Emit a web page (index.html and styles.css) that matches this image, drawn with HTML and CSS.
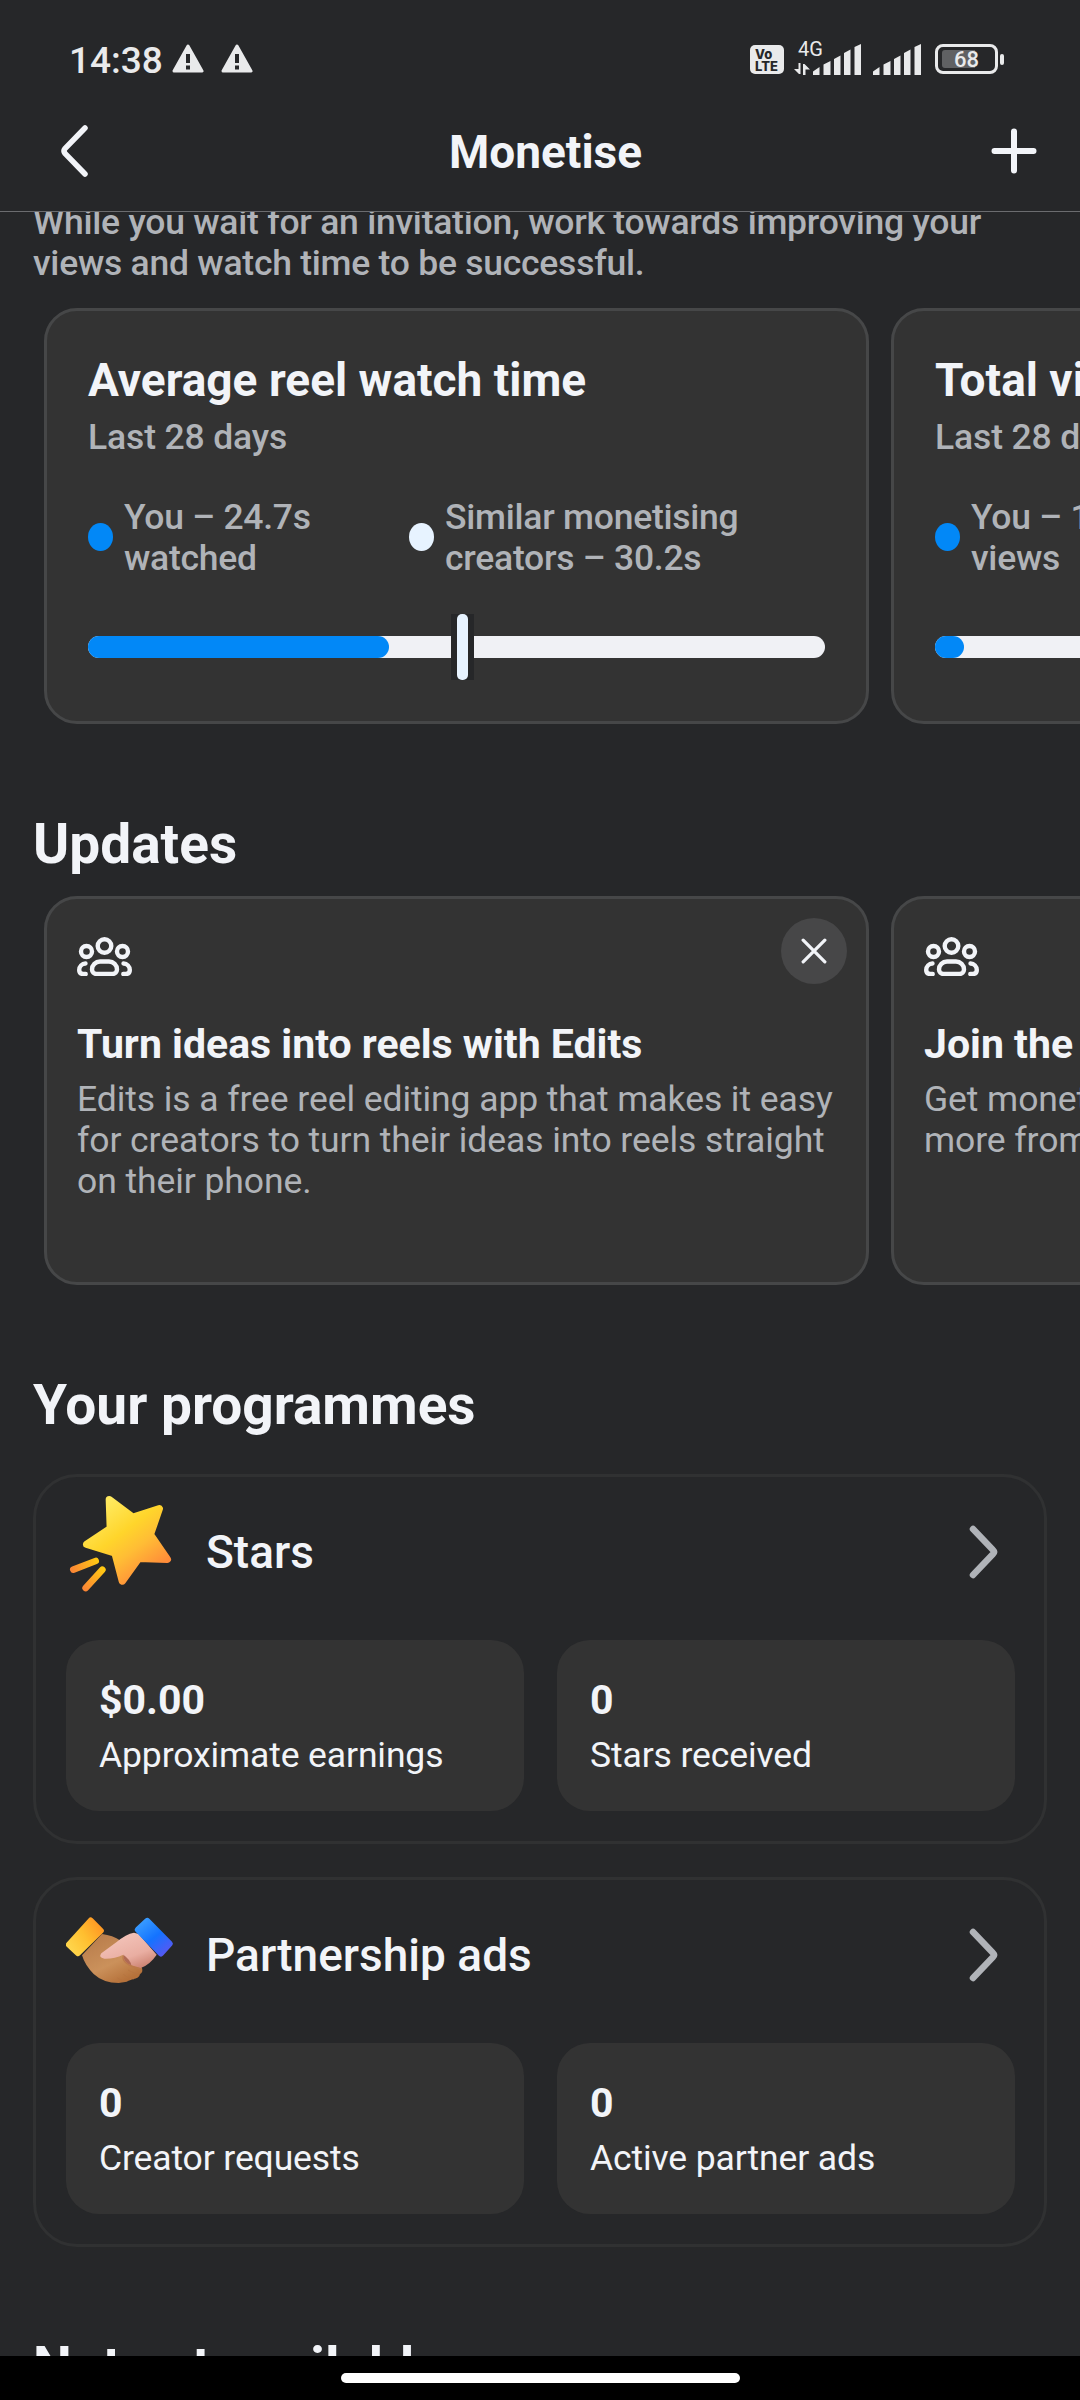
FILE: index.html
```html
<!DOCTYPE html>
<html lang="en-GB">
<head>
<meta charset="utf-8">
<title>Monetise</title>
<link rel="stylesheet" href="styles.css">
</head>
<body>
<svg class="defs" aria-hidden="true">
  <symbol id="people" viewBox="0 0 55 39">
    <g fill="none" stroke="#f2f4f8" stroke-width="4.400" stroke-linecap="round" stroke-linejoin="round">
      <ellipse cx="27.500" cy="9" rx="6.800" ry="6.800"/>
      <circle cx="9.500" cy="14.500" r="5.500"/>
      <circle cx="45.500" cy="14.500" r="5.500"/>
      <path d="M23 24.500h9a8 8 0 0 1 8 8v0a4.500 4.500 0 0 1-4.500 4.500h-16a4.500 4.500 0 0 1-4.500-4.500v0a8 8 0 0 1 8-8z"/>
      <path d="M8.500 26.500a6.500 6.500 0 0 0-6.300 6.500q0 4 4 4h2.500M46.500 26.500a6.500 6.500 0 0 1 6.300 6.500q0 4-4 4h-2.500"/>
    </g>
  </symbol>
  <symbol id="warning" viewBox="0 0 32 30">
    <path d="M16 2 30 27H2z" fill="#e9eaeb" stroke="#e9eaeb" stroke-width="3" stroke-linejoin="round"/>
    <path d="M16 10v9M16 21.500v4" stroke="#262729" stroke-width="4"/>
  </symbol>
  <symbol id="signal" viewBox="0 0 48 31">
    <path d="M0 27.500 6.500 23v8H0zM10.500 20.500 17.500 17v14h-7zM21 15l6.500-3.500V31H21zM31 9l6.500-3.500V31H31zM41.500 3 48 0v31h-6.500z" fill="#e9eaeb"/>
  </symbol>
  <symbol id="chevron" viewBox="0 0 30 54">
    <path d="M4 4 24 25q2 2 0 4L4 50" fill="none" stroke="#b0b3b8" stroke-width="6.500" stroke-linecap="round"/>
  </symbol>
</svg>

<div class="screen">
  <div class="status">
    <span class="clock">14:38</span>
    <svg class="warn"><use href="#warning"/></svg>
    <svg class="warn second"><use href="#warning"/></svg>
    <span class="volte"><span>Vo</span><span>LTE</span></span>
    <span class="network">
      <span class="gen">4G</span>
      <svg class="arrows" viewBox="0 0 16 12"><path d="M4.500 0h2v11h-1.500L0 6h4.500zM9 12V1h1.500L16 6.500h-4.500V12z" fill="#e9eaeb"/></svg>
    </span>
    <svg class="bars"><use href="#signal"/></svg>
    <svg class="bars sim2"><use href="#signal"/></svg>
    <span class="battery"><span class="level">68</span></span><span class="nub"></span>
  </div>

  <header class="header">
    <svg class="back" viewBox="0 0 28 52"><path d="M24 3 4 23.500q-2 2.500 0 5L24 49" fill="none" stroke="#f2f4f8" stroke-width="5.500" stroke-linecap="round"/></svg>
    <h1>Monetise</h1>
    <svg class="plus" viewBox="0 0 46 46"><path d="M23 3.500v39M3.500 23h39" stroke="#f2f4f8" stroke-width="6" stroke-linecap="round"/></svg>
  </header>

  <main class="content">
    <p class="intro">While you wait for an invitation, work towards improving your views and watch time to be successful.</p>

    <div class="carousel">
      <article class="card metric">
        <h3>Average reel watch time</h3>
        <p class="period">Last 28 days</p>
        <div class="legend">
          <div class="key"><i class="dot you"></i><span>You – 24.7s<br>watched</span></div>
          <div class="key"><i class="dot"></i><span>Similar monetising<br>creators – 30.2s</span></div>
        </div>
        <div class="track"><div class="fill" style="width:301px"></div><div class="marker" style="left:363px"></div></div>
      </article>
      <article class="card metric">
        <h3>Total views</h3>
        <p class="period">Last 28 days</p>
        <div class="legend">
          <div class="key"><i class="dot you"></i><span>You – 1<br>views</span></div>
        </div>
        <div class="track"><div class="fill" style="width:29px"></div></div>
      </article>
    </div>

    <h2>Updates</h2>
    <div class="carousel updates">
      <article class="card update">
        <svg class="people"><use href="#people"/></svg>
        <button class="close" aria-label="Close"><svg viewBox="0 0 24 24"><path d="M2 2 22 22M22 2 2 22" stroke="#f2f4f8" stroke-width="3" stroke-linecap="round"/></svg></button>
        <h4>Turn ideas into reels with Edits</h4>
        <p>Edits is a free reel editing app that makes it easy<br>for creators to turn their ideas into reels straight<br>on their phone.</p>
      </article>
      <article class="card update">
        <svg class="people"><use href="#people"/></svg>
        <h4>Join the</h4>
        <p>Get monetisation<br>more from</p>
      </article>
    </div>

    <h2 class="programmes-title">Your programmes</h2>
    <section class="programme">
      <div class="programme-head">
        <svg class="emblem" viewBox="48 30 324 324">
          <defs>
            <linearGradient id="gold" gradientUnits="userSpaceOnUse" x1="140" y1="90" x2="290" y2="290"><stop offset="0" stop-color="#ffe95e"/><stop offset=".4" stop-color="#ffd52b"/><stop offset=".65" stop-color="#ffbd35"/><stop offset="1" stop-color="#ff8b39"/></linearGradient>
            <linearGradient id="ray1" gradientUnits="userSpaceOnUse" x1="140" y1="240" x2="65" y2="272"><stop offset="0" stop-color="#ffc813"/><stop offset="1" stop-color="#fb8635"/></linearGradient>
            <linearGradient id="ray2" gradientUnits="userSpaceOnUse" x1="158" y1="268" x2="104" y2="328"><stop offset="0" stop-color="#ffc813"/><stop offset="1" stop-color="#fb8635"/></linearGradient>
          </defs>
          <path d="M178 59 249 112 328 86 301 164 352 238 266 235 217 303 195 219 110 193 181 146z" fill="url(#gold)" stroke="url(#gold)" stroke-width="22" stroke-linejoin="round"/>
          <path d="M70 269 137 243" stroke="url(#ray1)" stroke-width="20" stroke-linecap="round"/>
          <path d="M107 324 157 269" stroke="url(#ray2)" stroke-width="20" stroke-linecap="round"/>
        </svg>
        <h3>Stars</h3>
        <svg class="chevron"><use href="#chevron"/></svg>
      </div>
      <div class="tiles">
        <div class="tile"><strong>$0.00</strong><span>Approximate earnings</span></div>
        <div class="tile"><strong>0</strong><span>Stars received</span></div>
      </div>
    </section>

    <section class="programme">
      <div class="programme-head">
        <svg class="emblem" viewBox="18 -51 324 324">
          <defs>
            <linearGradient id="cuffL" gradientUnits="userSpaceOnUse" x1="30" y1="110" x2="120" y2="50"><stop offset="0" stop-color="#ffd44a"/><stop offset=".5" stop-color="#ffbf30"/><stop offset="1" stop-color="#ff9a24"/></linearGradient>
            <linearGradient id="cuffR" gradientUnits="userSpaceOnUse" x1="245" y1="30" x2="325" y2="130"><stop offset="0" stop-color="#3a9dff"/><stop offset=".5" stop-color="#1473ff"/><stop offset="1" stop-color="#5a57f2"/></linearGradient>
            <linearGradient id="brown" gradientUnits="userSpaceOnUse" x1="110" y1="75" x2="180" y2="220"><stop offset="0" stop-color="#b97d4c"/><stop offset=".6" stop-color="#cb915b"/><stop offset="1" stop-color="#b5713a"/></linearGradient>
            <linearGradient id="pink" gradientUnits="userSpaceOnUse" x1="190" y1="70" x2="230" y2="175"><stop offset="0" stop-color="#f3c3b9"/><stop offset=".65" stop-color="#e9aea2"/><stop offset="1" stop-color="#cf8777"/></linearGradient>
          </defs>
          <path d="M126 72Q158 76 182 92L225 140 246 174Q250 188 240 192 238 205 218 208 200 217 176 219 130 219 101 192 75 166 66 136z" fill="url(#brown)"/>
          <path d="M222 68Q198 72 170 96L124 130Q114 143 133 146 163 147 190 134 188 158 214 166L242 174Q270 164 290 134L236 72z" fill="url(#pink)"/>
          <path d="M190 134Q188 158 214 166 212 150 190 134z" fill="#b06a55"/>
          <path d="M190 138Q186 150 200 160 214 172 242 177" fill="none" stroke="#bc794b" stroke-width="4"/>
          <path d="M204 180Q222 193 241 191M190 193Q205 207 222 207M172 204Q186 215 202 214" fill="none" stroke="#b47340" stroke-width="2"/>
          <path d="M92 31 123 62 54 130 26 104z" fill="url(#cuffL)" stroke="url(#cuffL)" stroke-width="17" stroke-linejoin="round"/>
          <path d="M262 32 330 101 303 131 233 59z" fill="url(#cuffR)" stroke="url(#cuffR)" stroke-width="17" stroke-linejoin="round"/>
        </svg>
        <h3>Partnership ads</h3>
        <svg class="chevron"><use href="#chevron"/></svg>
      </div>
      <div class="tiles">
        <div class="tile"><strong>0</strong><span>Creator requests</span></div>
        <div class="tile"><strong>0</strong><span>Active partner ads</span></div>
      </div>
    </section>

    <h2 class="unavailable">Not yet available</h2>
  </main>

  <div class="navbar"><span class="pill"></span></div>
</div>
</body>
</html>
```

FILE: styles.css
```css
* { box-sizing: border-box; margin: 0; padding: 0; }
html, body { background: #262729; }
body { font-family: Roboto, "Liberation Sans", sans-serif; color: #f2f4f8; }
svg { display: block; flex: none; }
.defs { position: absolute; width: 0; height: 0; }

.screen { width: 1080px; height: 2400px; display: flex; flex-direction: column; overflow: hidden; }

.status { height: 91px; flex: none; display: flex; align-items: flex-start; padding: 42px 76px 0 69px; color: #e9eaeb; }
.clock { width: 103px; font-size: 37px; line-height: 37px; font-weight: 500; white-space: nowrap; }
.warn { width: 32px; height: 30px; margin-top: 2px; }
.warn.second { margin-left: 17px; }
.volte { width: 34px; height: 29px; margin: 3px 10px 0 auto; border-radius: 5px; background: #e9eaeb; color: #262729; display: flex; flex-direction: column; padding: 3px 0 0 5px; font-family: Inter, sans-serif; font-size: 13px; font-weight: 800; line-height: 12px; }
.network { width: 28px; height: 33px; margin-right: -9px; display: flex; flex-direction: column; }
.gen { font-size: 20px; line-height: 14px; padding-left: 4px; margin-bottom: 7px; white-space: nowrap; }
.arrows { width: 16px; height: 12px; }
.bars { width: 48px; height: 31px; margin-top: 2px; }
.bars.sim2 { margin-left: 12px; }
.battery { width: 63px; height: 30px; margin: 2px 2px 0 14px; border: 3px solid #e9eaeb; border-radius: 8px; padding: 3px 4px; }
.level { display: block; height: 18px; border-radius: 3px; background: linear-gradient(90deg, #606163 33px, transparent 33px); font-size: 22px; line-height: 19px; font-weight: 500; text-align: center; }
.nub { width: 4px; height: 11px; margin-top: 12px; border-radius: 2px; background: #e9eaeb; }

.header { height: 121px; flex: none; display: flex; align-items: center; justify-content: space-between; padding: 0 43px 0 61px; border-bottom: 1px solid #6b6c6f; }
.back { width: 28px; height: 52px; }
.header h1 { font-size: 46px; line-height: 54px; font-weight: 700; padding: 2px 0 0 11px; }
.plus { width: 46px; height: 46px; }

.content { flex: 1; overflow: hidden; display: flex; flex-direction: column; }
.content > * { flex: none; }
.intro { margin: -10px 33px 24px; font-size: 35.5px; line-height: 41px; font-weight: 500; letter-spacing: -0.25px; color: #b0b3b8; }

.carousel { display: flex; gap: 22px; padding-left: 44px; overflow: hidden; }
.card { width: 825px; flex: none; background: #333333; border: 3px solid #464748; border-radius: 33px; white-space: nowrap; }
.metric { height: 416px; padding: 42px 41px 0; }
.metric h3 { font-size: 46px; line-height: 55px; font-weight: 700; }
.period { margin-top: 9px; font-size: 35.5px; line-height: 41px; font-weight: 500; letter-spacing: -0.15px; color: #b0b3b8; }
.legend { display: grid; grid-template-columns: 321px 1fr; margin-top: 38px; font-size: 35.5px; line-height: 41px; font-weight: 500; letter-spacing: -0.25px; color: #b0b3b8; }
.key { display: flex; align-items: center; gap: 11px; }
.key span { padding-top: 1px; margin-bottom: -1px; }
.dot { width: 25px; height: 28px; border-radius: 50%; background: #e7f3ff; flex: none; }
.dot.you { background: #0288f7; }
.track { position: relative; height: 22px; margin-top: 58px; border-radius: 11px; background: #f0f1f5; }
.fill { height: 22px; border-radius: 11px; background: #0288f7; }
.marker { position: absolute; top: -22px; width: 23px; height: 66px; padding: 0 6px; background: #262729; }
.marker::before { content: ""; display: block; height: 66px; border-radius: 5px; background: #e7f3ff; }

h2 { margin: 87px 33px 19px; font-size: 55px; line-height: 66px; font-weight: 700; }
.update { position: relative; height: 389px; padding: 38px 30px 0; }
.people { width: 55px; height: 39px; }
.close { position: absolute; top: 19px; right: 19px; width: 66px; height: 66px; border: 0; border-radius: 50%; background: #474748; display: grid; place-items: center; }
.close svg { width: 26px; height: 26px; }
.update h4 { margin-top: 43px; font-size: 41px; line-height: 50px; font-weight: 700; }
.update p { margin-top: 10px; font-size: 35.5px; line-height: 41px; letter-spacing: -0.08px; color: #b0b3b8; }

.programmes-title { margin-bottom: 36px; }
.programme { height: 370px; margin: 0 33px 33px; padding: 13px 29px 0 30px; border: 3px solid #303132; border-radius: 44px; }
.programme-head { height: 108px; display: flex; align-items: center; }
.emblem { width: 108px; height: 108px; margin-right: 32px; }
.programme-head h3 { padding-top: 16px; font-size: 46px; line-height: 55px; font-weight: 500; }
.chevron { width: 30px; height: 54px; margin: 16px 16px 0 auto; }
.tiles { display: grid; grid-template-columns: 1fr 1fr; gap: 33px; margin-top: 42px; }
.tile { height: 171px; padding: 35px 33px 0; border-radius: 33px; background: #333333; display: flex; flex-direction: column; white-space: nowrap; }
.tile strong { font-size: 41px; line-height: 50px; font-weight: 700; }
.tile span { margin-top: 10px; font-size: 35.5px; line-height: 41px; letter-spacing: -0.12px; }
.unavailable { margin-top: 54px; }

.navbar { height: 44px; flex: none; background: #000; display: flex; justify-content: center; padding-top: 17px; }
.pill { width: 399px; height: 10px; border-radius: 5px; background: #fff; }
```
